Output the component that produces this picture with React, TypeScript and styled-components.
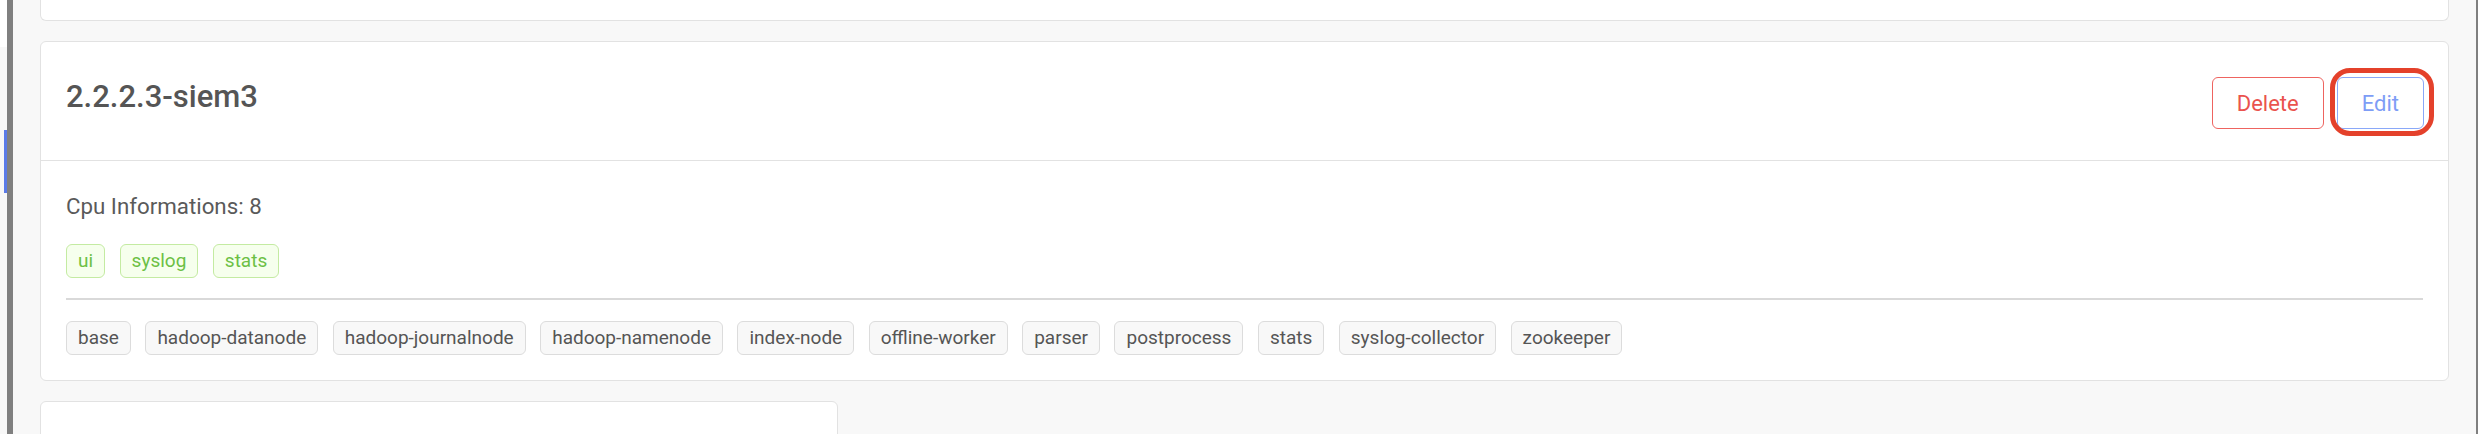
import React, { FC } from "react";
import styled, { createGlobalStyle } from "styled-components";

const GlobalStyle = createGlobalStyle`
  html, body {
    margin: 0;
    padding: 0;
    background: #f8f8f8;
    font-family: Roboto, "Liberation Sans", sans-serif;
  }
`;

const roles = ["ui", "syslog", "stats"];
const services = [
  "base",
  "hadoop-datanode",
  "hadoop-journalnode",
  "hadoop-namenode",
  "index-node",
  "offline-worker",
  "parser",
  "postprocess",
  "stats",
  "syslog-collector",
  "zookeeper",
];

const NodeCard: FC<{ name: string; cpu: number }> = ({ name, cpu }) => (
  <Card>
    <CardHead>
      <Title>{name}</Title>
      <Actions>
        <Button variant="danger">Delete</Button>
        <Highlight>
          <Button variant="primary">Edit</Button>
        </Highlight>
      </Actions>
    </CardHead>
    <CardBody>
      <Info>Cpu Informations: {cpu}</Info>
      <TagRow>
        {roles.map((r) => (
          <Tag key={r} tone="green">
            {r}
          </Tag>
        ))}
      </TagRow>
      <Divider />
      <TagRow>
        {services.map((s) => (
          <Tag key={s}>{s}</Tag>
        ))}
      </TagRow>
    </CardBody>
  </Card>
);

const App: FC = () => {
  return (
    <Page>
      <GlobalStyle />
      <Rail>
        <RailCap />
        <RailMarker />
      </Rail>
      <RailBar />
      <Content>
        <TopCard />
        <NodeCard name="2.2.2.3-siem3" cpu={8} />
        <NextCard />
      </Content>
      <EdgeBar />
    </Page>
  );
};

const Page = styled.div`
  display: flex;
  height: 434px;
  overflow: hidden;
  background: #f8f8f8;
`;

const Rail = styled.div`
  flex: 0 0 7px;
  display: flex;
  flex-direction: column;
  align-items: flex-end;
`;

const RailCap = styled.div`
  align-self: stretch;
  height: 47px;
  background: #ffffff;
`;

const RailMarker = styled.div`
  width: 3px;
  height: 63px;
  margin-top: 83px;
  background: #5b7be8;
`;

const RailBar = styled.div`
  flex: 0 0 6px;
  background: #808080;
`;

const EdgeBar = styled.div`
  flex: 0 0 2px;
  background: #808080;
`;

const Content = styled.div`
  flex: 1;
  min-width: 0;
  padding: 0 27px;
  display: flex;
  flex-direction: column;
  gap: 20px;
`;

const Card = styled.div`
  background: #fff;
  border: 1px solid #e2e2e2;
  border-radius: 6px;
`;

const TopCard = styled(Card)`
  flex: 0 0 20px;
  border-top: none;
  border-radius: 0 0 6px 6px;
`;

const NextCard = styled(Card)`
  flex: 0 0 60px;
  width: 796px;
`;

const CardHead = styled.div`
  display: flex;
  justify-content: space-between;
  align-items: flex-start;
  padding: 35px 24px 31px 25px;
  border-bottom: 1px solid #e2e2e2;
`;

const Title = styled.div`
  margin-top: 4px;
  font-size: 31px;
  line-height: 32px;
  font-weight: 500;
  color: #555555;
`;

const Actions = styled.div`
  display: flex;
  gap: 13px;
`;

const Button = styled.button<{ variant: "danger" | "primary" }>`
  height: 52px;
  padding: 0 24px;
  border-radius: 6px;
  background: #fff;
  font-family: Roboto, "Liberation Sans", sans-serif;
  font-size: 22px;
  cursor: pointer;
  border: 1px solid
    ${(p) => (p.variant === "danger" ? "#ee6460" : "#8aa8f8")};
  color: ${(p) => (p.variant === "danger" ? "#ea534e" : "#7e9df6")};
`;

const Highlight = styled.div`
  position: relative;
  display: flex;

  &::after {
    content: "";
    position: absolute;
    top: -9px;
    left: -7px;
    right: -10px;
    bottom: -7px;
    border: 5px solid #e4412b;
    border-radius: 20px;
    pointer-events: none;
  }
`;

const CardBody = styled.div`
  padding: 28px 25px 25px;
`;

const Info = styled.div`
  font-size: 22.3px;
  line-height: 34px;
  color: #5a5a5a;
`;

const TagRow = styled.div`
  display: flex;
  flex-wrap: wrap;
  gap: 14.5px;
  margin-top: 21px;

  &:last-child {
    margin-top: 0;
  }
`;

const Tag = styled.span<{ tone?: "green" }>`
  height: 34px;
  box-sizing: border-box;
  padding: 0 11px;
  line-height: 32px;
  font-size: 19px;
  border-radius: 6px;
  border: 1px solid ${(p) => (p.tone === "green" ? "#c4eba2" : "#dcdcdc")};
  background: ${(p) => (p.tone === "green" ? "#f6ffed" : "#f8f8f8")};
  color: ${(p) => (p.tone === "green" ? "#6cbf45" : "#555555")};
`;

const Divider = styled.div`
  height: 2px;
  background: #d9d9d9;
  margin: 20px 0 21px;
`;

export default App;
